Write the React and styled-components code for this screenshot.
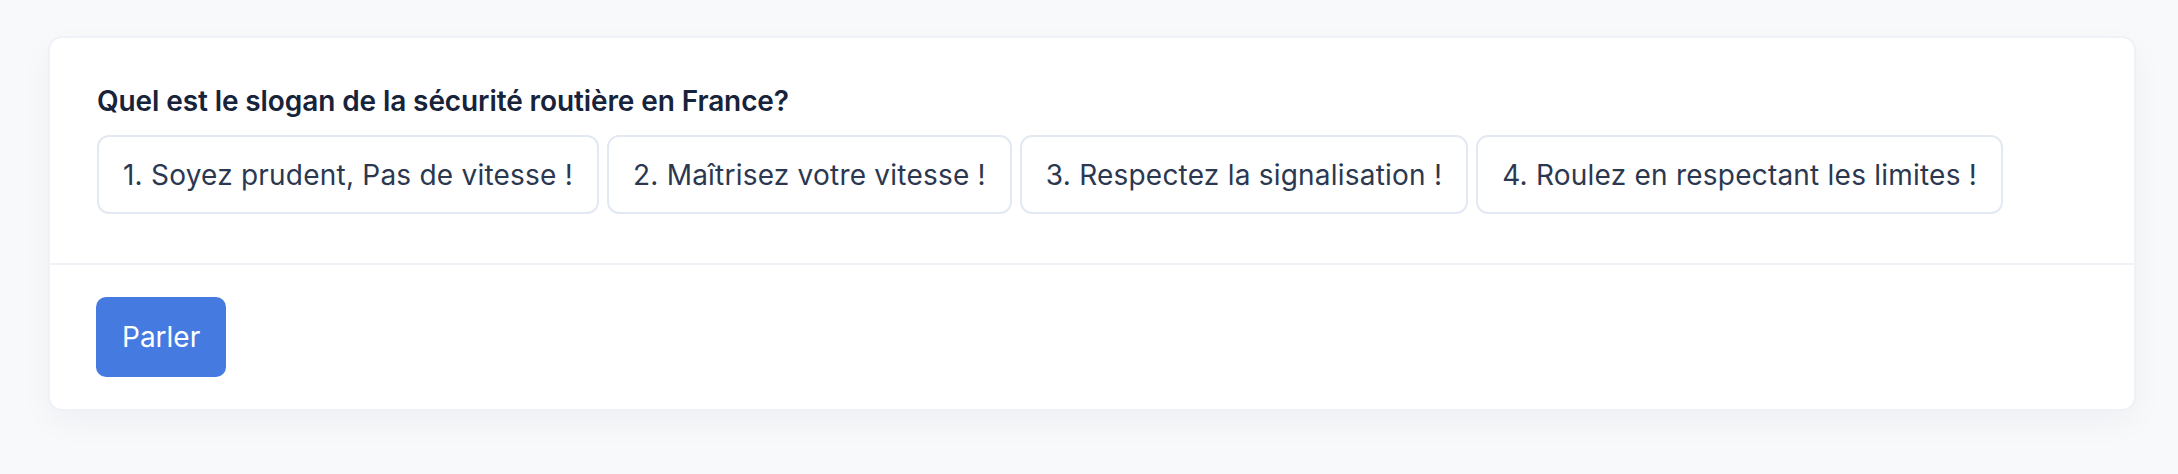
import React from "react";
import styled, { createGlobalStyle } from "styled-components";

const GlobalStyle = createGlobalStyle`
  html, body {
    margin: 0;
    padding: 0;
    background-color: #f8f9fb;
    font-family: "Inter", "Liberation Sans", sans-serif;
  }
`;

const Page = styled.div`
  padding: 36px 42px 64px 48px;
`;

const Card = styled.div`
  background-color: white;
  border: 2px solid #eef1f6;
  border-radius: 14px;
  box-shadow: 0 12px 32px rgba(15, 23, 42, 0.04);
  overflow: hidden;
`;

const CardBody = styled.div`
  padding: 42px 47px 49px;
  border-bottom: 2px solid #eef1f6;
`;

const Question = styled.h2`
  margin: 0 0 13px;
  font-size: 28px;
  line-height: 42px;
  font-weight: 600;
  letter-spacing: -0.1px;
  color: #17233b;
`;

const Options = styled.div`
  display: flex;
  flex-wrap: wrap;
  gap: 8px;
`;

const Option = styled.div`
  display: flex;
  align-items: center;
  box-sizing: border-box;
  height: 79px;
  padding: 0 24px;
  border: 2px solid #e3e9f3;
  border-radius: 12px;
  font-size: 28px;
  letter-spacing: 0.22px;
  color: #2b3850;
  cursor: pointer;
`;

const CardFooter = styled.div`
  padding: 32px 46px 32px;
`;

const SpeakButton = styled.button`
  height: 80px;
  padding: 0 26px;
  border: none;
  border-radius: 10px;
  background-color: #457ae0;
  color: white;
  font-family: inherit;
  font-size: 28px;
  cursor: pointer;
`;

const answers = [
  "1. Soyez prudent, Pas de vitesse !",
  "2. Maîtrisez votre vitesse !",
  "3. Respectez la signalisation !",
  "4. Roulez en respectant les limites !"
];

export default function App() {
  return (
    <>
      <GlobalStyle />
      <Page>
        <Card>
          <CardBody>
            <Question>Quel est le slogan de la sécurité routière en France?</Question>
            <Options>
              {answers.map(a => (
                <Option key={a}>{a}</Option>
              ))}
            </Options>
          </CardBody>
          <CardFooter>
            <SpeakButton>Parler</SpeakButton>
          </CardFooter>
        </Card>
      </Page>
    </>
  );
}
